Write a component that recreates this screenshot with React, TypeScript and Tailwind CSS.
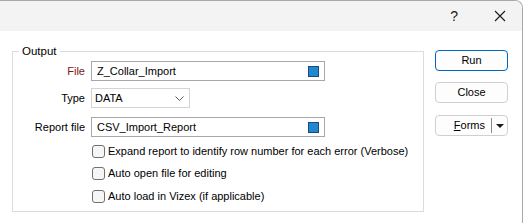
import React from "react";

const font = { fontFamily: '"Liberation Sans", Arial, sans-serif' };

function BlueSquare() {
  return <span className="block shrink-0 w-[11px] h-[11px] border border-[#1f4a72] bg-[#1f88d2]" />;
}

function TextInput({ value }: { value: string }) {
  return (
    <div className="flex items-center w-[234px] h-[20px] border border-[#a8a8a8] bg-white pl-[5px] pr-[5px]">
      <span className="flex-1 leading-none text-black whitespace-nowrap">{value}</span>
      <BlueSquare />
    </div>
  );
}

function Check({ label }: { label: string }) {
  return (
    <div className="flex items-center h-[22px] ml-[79px]">
      <span className="block shrink-0 w-[13px] h-[13px] rounded-[3px] border border-[#707070] bg-[#f6f6f6]" />
      <span className="ml-[3px] text-black leading-none whitespace-nowrap">{label}</span>
    </div>
  );
}

export default function App() {
  return (
    <div className="w-[524px] h-[223px] bg-white text-[11px]" style={font}>
      <div className="w-[523px] h-[223px] border-t border-r border-[#a9a9a9] rounded-tr-[8px] overflow-hidden bg-white">
        <div className="h-[30px] bg-[#f3f3f3] flex items-center justify-end">
          <span className="text-[14px] text-[#1a1a1a] mr-[36px]">?</span>
          <svg width="12" height="12" viewBox="0 0 12 12" className="mr-[16px]">
            <path d="M1 1 L11 11 M11 1 L1 11" stroke="#1a1a1a" strokeWidth="1.1" />
          </svg>
        </div>
        <div className="flex pl-[12px] pt-[20px]">
          <div className="relative w-[412px] h-[161px] border border-[#dcdcdc]">
            <span className="absolute left-[6px] -top-[10px] bg-white px-[3px] text-[11.5px] text-black leading-[18px]">
              Output
            </span>
            <div className="flex items-center mt-[9px]">
              <span className="w-[72px] text-right text-[#7d1414]">File</span>
              <div className="ml-[6px]">
                <TextInput value="Z_Collar_Import" />
              </div>
            </div>
            <div className="flex items-center mt-[7px]">
              <span className="w-[72px] text-right text-black">Type</span>
              <div className="ml-[6px] flex items-center w-[99px] h-[20px] border border-[#d4d4d4] bg-white pl-[3px] pr-[5px]">
                <span className="flex-1 leading-none text-black">DATA</span>
                <svg width="9" height="5" viewBox="0 0 9 5">
                  <path d="M0.5 0.5 L4.5 4.5 L8.5 0.5" fill="none" stroke="#5a5a5a" strokeWidth="1" />
                </svg>
              </div>
            </div>
            <div className="flex items-center mt-[9px]">
              <span className="w-[72px] text-right text-black whitespace-nowrap">Report file</span>
              <div className="ml-[6px]">
                <TextInput value="CSV_Import_Report" />
              </div>
            </div>
            <div className="mt-[3px]">
              <Check label="Expand report to identify row number for each error (Verbose)" />
              <Check label="Auto open file for editing" />
              <div className="mt-[1px]">
                <Check label="Auto load in Vizex (if applicable)" />
              </div>
            </div>
          </div>
          <div className="ml-[11px] w-[73px] -mt-[1px] flex flex-col">
            <button className="h-[21px] w-[73px] rounded-[4px] border border-[#0067c0] bg-[#fdfdfd] text-black leading-none">
              Run
            </button>
            <button className="mt-[11px] h-[21px] w-[73px] rounded-[4px] border border-[#d0d0d0] bg-[#fdfdfd] text-black leading-none">
              Close
            </button>
            <div className="mt-[12px] h-[21px] w-[73px] rounded-[4px] border border-[#d0d0d0] bg-[#fdfdfd] flex items-center">
              <span className="w-[55px] text-right pr-[6px] text-black leading-none">
                <span className="underline">F</span>orms
              </span>
              <span className="w-px h-[15px] bg-[#8a8a8a]" />
              <span className="flex-1 flex justify-center">
                <svg width="8" height="4" viewBox="0 0 8 4">
                  <path d="M0 0 L8 0 L4 4 Z" fill="#1a1a1a" />
                </svg>
              </span>
            </div>
          </div>
        </div>
      </div>
    </div>
  );
}
